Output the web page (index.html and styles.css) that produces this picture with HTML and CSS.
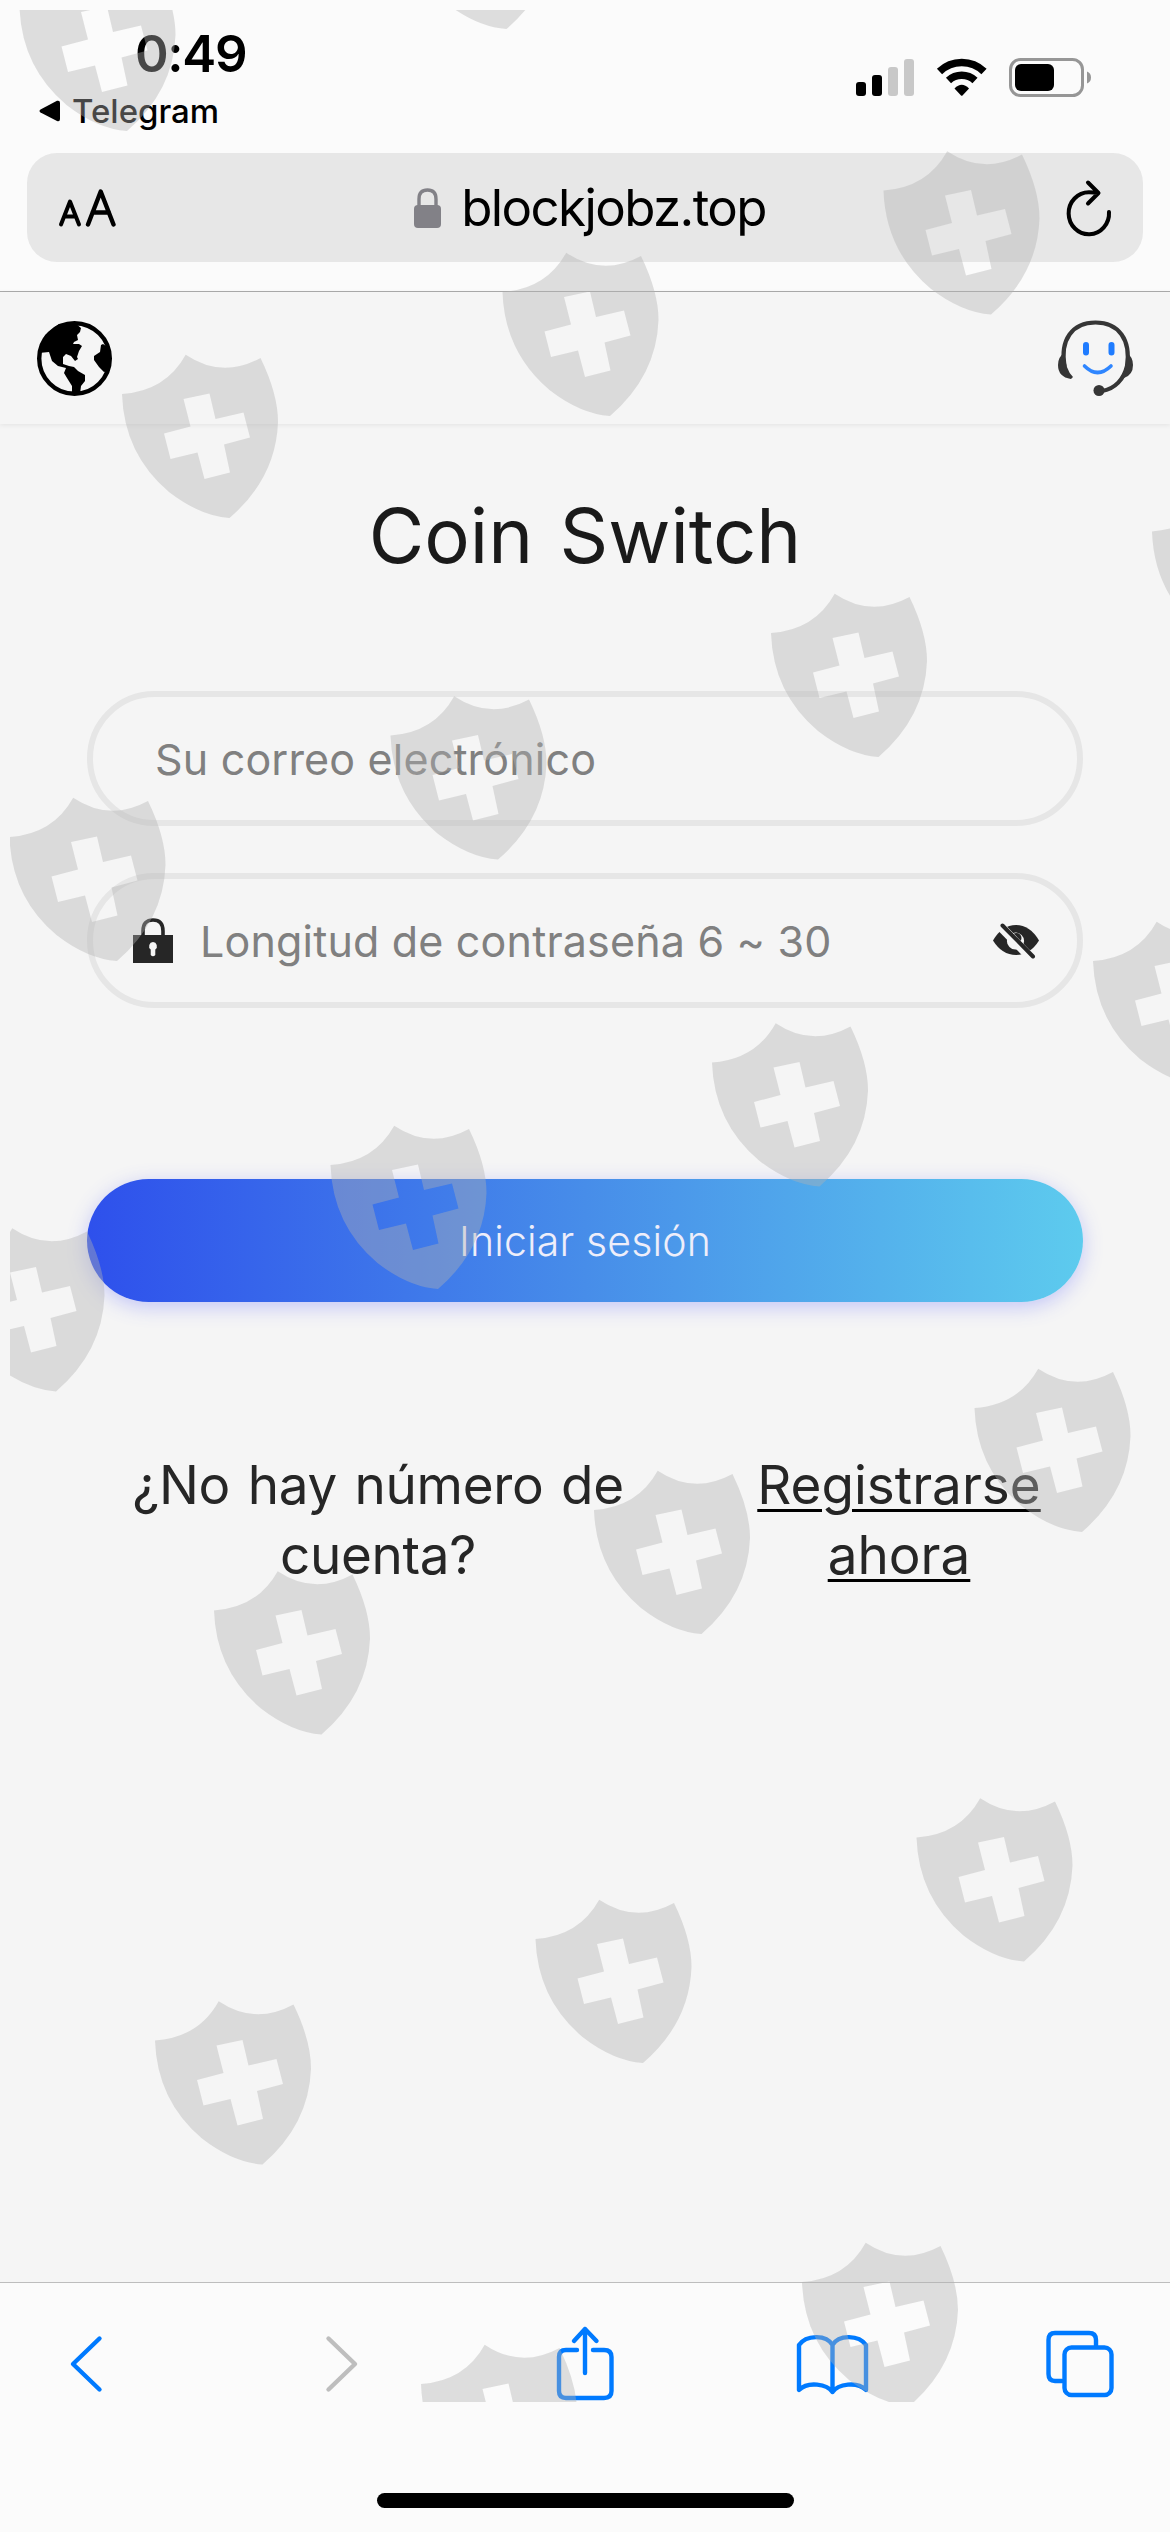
FILE: index.html
```html
<!DOCTYPE html>
<html lang="es">
<head>
<meta charset="utf-8">
<title>Coin Switch</title>
<link rel="stylesheet" href="styles.css">
</head>
<body>
<div class="phone">
  <header class="browser-top">
    <div class="status">
      <div class="status-left">
        <div class="time">0:49</div>
        <div class="back-app">
          <svg width="22" height="22" viewBox="0 0 22 22"><path d="M1.500 9.500 L18 .8 Q21 0 21 3 V19 Q21 22 18 21 L1.500 12.500 Q-.5 11 1.500 9.500Z"/></svg>
          <span>Telegram</span>
        </div>
      </div>
      <svg class="status-icons" width="240" height="42" viewBox="854 57 240 42">
        <rect x="856" y="82" width="10" height="14" rx="3"/>
        <rect x="872" y="75" width="10" height="21" rx="3"/>
        <rect x="888" y="67" width="10" height="29" rx="3" fill="#c8c8c8"/>
        <rect x="904" y="59" width="10" height="37" rx="3" fill="#c8c8c8"/>
        <g fill="none" stroke="#000" stroke-width="7.500">
          <path d="M939.500 71.500 A32 32 0 0 1 984 71.500"/>
          <path d="M948.500 80.500 A19.500 19.500 0 0 1 975 80.500"/>
        </g>
        <path d="M954.500 88.500 Q961.800 81 969 88.500 L962.500 95.500 Q961.800 96 961 95.500Z"/>
        <rect x="1010.500" y="59.500" width="72" height="36" rx="10" fill="none" stroke="#969696" stroke-width="3"/>
        <rect x="1015" y="64" width="39" height="27" rx="6"/>
        <path d="M1087 71.500 Q1091 73 1091 77.500 T1087 83.500Z" fill="#969696"/>
      </svg>
    </div>
    <div class="url-bar">
      <svg class="aa" width="60" height="42" viewBox="56 187 60 42" fill="none" stroke="#000" stroke-width="4" stroke-linecap="round" stroke-linejoin="round">
        <path d="M61 224.500 L70 201.500 L79 224.500 M64.500 216.500 H75.500"/>
        <path d="M88 224.500 L100.700 191.500 L113.500 224.500 M92.500 212.500 H109" stroke-width="4.400"/>
      </svg>
      <div class="address">
        <svg width="27" height="40" viewBox="0 0 27 40"><rect y="17" width="27" height="23" rx="4" fill="#828187"/><path d="M5 18 V11 Q5 2 13.500 2 T22 11 V18" fill="none" stroke="#828187" stroke-width="3.400"/></svg>
        <span>blockjobz.top</span>
      </div>
      <svg class="reload" width="50" height="60" viewBox="1064 176 50 60" fill="none" stroke="#000" stroke-width="4" stroke-linecap="round" stroke-linejoin="round">
        <path d="M1109 210 A20.200 21 0 1 1 1089 190.300 L1098 190.800 M1088 180.500 L1098.500 191 L1088 201.500"/>
      </svg>
    </div>
  </header>

  <main class="page">
    <nav class="page-bar">
      <svg width="75" height="75" viewBox="0 0 75 75">
        <circle cx="37.500" cy="37.500" r="35.300" fill="none" stroke="#000" stroke-width="4.400"/>
        <path d="M38 2 L44 7 L43 11 L40 14 L41 19 L37 21 L36 23 L42 23 L45 25 L42 30 L40 36 L41 38 L38 40 L34 35 L29 33 L26 36 L26 43 L32 45 L37 46 L41 50 L48 54 L48 60 L44 65 L43 73 L35 73 V65 L30 57 L27 52 L29 47 L21 45 L15 40 L12 31 L2 32 L8 14 L22 3Z"/>
        <path d="M66 23 L72 27 L74 38 L71 50 L67 51 L62 46 L57 39 L57 35 L63 31 L64 24Z"/>
      </svg>
      <svg width="76" height="76" viewBox="0 0 76 76" fill="none" stroke="#363636" stroke-linecap="round">
        <path d="M6.500 46 C2 20 14 2.500 37.500 2.500 S73 20 69 46 C66 59 57 69 44 71" stroke-width="4.200"/>
        <path d="M6 33 Q0 37 0 45 Q0 57 13 59 L15 57 Q7 49 7 34Z M69 33 Q75 37 75 45 Q75 55 66 58 L63 57 Q69 47 69 34Z" fill="#363636" stroke="none"/>
        <circle cx="41" cy="70.500" r="5.500" fill="#363636" stroke="none"/>
        <path d="M28 25 V32.500 M53.500 25 V32.500" stroke="#1f7cff" stroke-width="6"/>
        <path d="M26.500 46 Q39.500 59 53 46" stroke="#2f86ff" stroke-width="3.600"/>
      </svg>
    </nav>
    <section class="login">
      <h1 class="title">Coin Switch</h1>
      <div class="field field-email"><span class="hint-email">Su correo electrónico</span></div>
      <div class="field field-pass">
        <svg width="40" height="45" viewBox="0 0 40 45"><path fill="#262626" fill-rule="evenodd" d="M0 17 H40 V45 H0Z M20 24 a4.200 4.200 0 0 0 -2.300 7.500 V37 q2.300 2.500 4.600 0 V31.500 A4.200 4.200 0 0 0 20 24Z"/><path d="M10 18 V13 Q10 2 20 2 T30 13 V18" fill="none" stroke="#262626" stroke-width="3.600"/></svg>
        <span class="hint-pass">Longitud de contraseña 6 ~ 30</span>
        <svg class="eye" width="48" height="36" viewBox="0 0 48 36">
          <path fill="#262626" d="M1 17.500 Q10 2 24 2 T47 17.500 Q38 32 24 32 T1 17.500Z"/>
          <circle cx="23.500" cy="18" r="8.600" fill="#f5f5f5"/>
          <circle cx="24.500" cy="15" r="5" fill="#262626"/>
          <path d="M9 4 L40 36" stroke="#f5f5f5" stroke-width="9"/>
          <path d="M10.500 2.500 L41 33.500" stroke="#262626" stroke-width="4" stroke-linecap="round"/>
        </svg>
      </div>
      <button class="submit" type="button">Iniciar sesión</button>
      <div class="note">
        <p class="question">¿No hay número de<br>cuenta?</p>
        <p class="register">Registrarse<br>ahora</p>
      </div>
    </section>
  </main>

  <footer class="toolbar">
    <div class="tools">
      <svg width="36" height="60" viewBox="68 2334 36 60"><path d="M99.500 2338.500 L73 2364 L99.500 2389.500"/></svg>
      <svg class="off" width="36" height="60" viewBox="324 2334 36 60"><path d="M328.500 2338.500 L355 2364 L328.500 2389.500"/></svg>
      <svg width="62" height="78" viewBox="554 2323 62 78"><path d="M577 2348 H566 Q559 2348 559 2355 V2389 Q559 2396 566 2396 H604 Q611.500 2396 611.500 2389 V2355 Q611.500 2348 604 2348 H593 M585 2371 V2327 M574 2339 L585 2327 L596.500 2339"/></svg>
      <svg width="76" height="64" viewBox="794 2331 76 64"><path d="M832.500 2391 C827 2383 808 2380 799 2389 V2344 C806 2334 826 2333 832.500 2344 C839 2333 859 2334 866 2344 V2389 C857 2380 838 2383 832.500 2391Z M832.500 2344 V2391"/></svg>
      <svg width="72" height="70" viewBox="1044 2329 72 70"><path d="M1062 2381 H1055 Q1048.500 2381 1048.500 2374 V2340 Q1048.500 2333 1055 2333 H1089 Q1096 2333 1096 2340 V2346"/><rect x="1064.500" y="2347.500" width="47" height="47.500" rx="7"/></svg>
    </div>
    <div class="home-bar"></div>
  </footer>

  <svg class="watermark" width="1160" height="2392" viewBox="10 10 1160 2392" aria-hidden="true">
    <defs>
      <path id="shield" fill-rule="evenodd" d="M0 0 Q43.700 -3 63.700 -39.300 Q100 -15 138.500 -36 Q156 0 156 28 Q154 84 107.500 124 Q78 122 47 98 Q2 60 0 0Z M61.500 5 L87.500 -.5 L93.500 25 L121.500 18.500 L128 43.500 L102 50.500 L108 78.500 L82.500 85 L75.500 58.500 L48.500 65 L42 39.500 L68.500 32.500Z"/>
    </defs>
    <g fill="#b2b2b2" fill-opacity=".4">
      <use href="#shield" x="19.500" y="7"/>
      <use href="#shield" x="399" y="-95"/>
      <use href="#shield" x="122" y="394"/>
      <use href="#shield" x="502.500" y="292"/>
      <use href="#shield" x="883.500" y="190.500"/>
      <use href="#shield" x="1152" y="531.500"/>
      <use href="#shield" x="771" y="633"/>
      <use href="#shield" x="390.500" y="735.500"/>
      <use href="#shield" x="9.500" y="837"/>
      <use href="#shield" x="1093" y="961"/>
      <use href="#shield" x="712" y="1062.500"/>
      <use href="#shield" x="330.500" y="1165"/>
      <use href="#shield" x="-51.500" y="1267.500"/>
      <use href="#shield" x="974.500" y="1408"/>
      <use href="#shield" x="594" y="1510"/>
      <use href="#shield" x="214" y="1610.500"/>
      <use href="#shield" x="916.500" y="1837.500"/>
      <use href="#shield" x="535.500" y="1939"/>
      <use href="#shield" x="155" y="2040.500"/>
      <use href="#shield" x="802" y="2282"/>
      <use href="#shield" x="421" y="2384"/>
    </g>
  </svg>
</div>
</body>
</html>
```
FILE: styles.css
```css
* { box-sizing: border-box; }

body {
  margin: 0;
  background: #f5f5f5;
  font-family: Inter, "Liberation Sans", sans-serif;
}

svg { display: block; flex: none; }

.phone {
  position: relative;
  width: 1170px;
  height: 2532px;
  overflow: hidden;
  display: flex;
  flex-direction: column;
}

.browser-top {
  height: 292px;
  background: #fbfbfb;
  border-bottom: 1px solid #acacac;
}

.status {
  height: 153px;
  display: flex;
  justify-content: space-between;
  padding: 29px 76px 0 39px;
}

.time {
  margin-left: 96px;
  font-size: 51px;
  font-weight: 600;
  line-height: 50px;
  letter-spacing: -1.3px;
  white-space: nowrap;
}

.back-app {
  display: flex;
  align-items: center;
  gap: 11px;
  height: 40px;
  margin-top: 12px;
  font-size: 33px;
  font-weight: 500;
}

.status-icons { margin-top: 28px; }

.url-bar {
  height: 109px;
  margin: 0 27px;
  padding: 0 29px;
  border-radius: 30px;
  background: #e7e7e7;
  display: flex;
  align-items: center;
  justify-content: space-between;
}

.address {
  display: flex;
  align-items: center;
  gap: 20px;
  font-size: 51px;
  letter-spacing: -1.6px;
}

.page { height: 1990px; background: #f5f5f5; }

.page-bar {
  height: 132px;
  padding: 0 36px 0 37px;
  display: flex;
  align-items: center;
  justify-content: space-between;
  box-shadow: 0 1px 5px rgba(0, 0, 0, .08);
}

.login { padding: 61px 87px 0; }

.title {
  margin: 0 0 106px;
  font-size: 76px;
  font-weight: 400;
  line-height: 100px;
  word-spacing: 5px;
  text-align: center;
  color: #1a1a1a;
}

.field {
  height: 135px;
  border: 6px solid #e6e6e6;
  border-radius: 68px;
  display: flex;
  align-items: center;
  color: #808080;
  font-size: 43px;
  letter-spacing: .18px;
  white-space: nowrap;
}

.field-email { padding-left: 62px; }
.field-pass { margin-top: 47px; padding: 0 37px 0 40px; }
.hint-pass { margin-left: 27px; }
.eye { margin-left: auto; }

.submit {
  display: block;
  width: 100%;
  height: 123px;
  margin-top: 171px;
  border: 0;
  border-radius: 62px;
  background: linear-gradient(90deg, #2e50ec, #478de9 50%, #5dcbee);
  box-shadow: 0 5px 20px rgba(80, 90, 255, .3);
  color: #eeeefa;
  font: 300 41px/123px Inter, "Liberation Sans", sans-serif;
  letter-spacing: .15px;
}

.note {
  display: grid;
  grid-template-columns: 582px 368px;
  gap: 46px;
  margin-top: 149px;
  color: #262626;
  font-size: 53px;
  line-height: 69.500px;
  text-align: center;
  white-space: nowrap;
}

.note p { margin: 0; }

.question {
  letter-spacing: -.3px;
  word-spacing: 3px;
}

.register {
  text-decoration: underline #000 3px;
  text-underline-offset: 5px;
}

.toolbar {
  height: 250px;
  background: #fbfbfb;
  border-top: 1px solid #bdbdbd;
}

.tools {
  height: 210px;
  padding: 0 54px 48px 68px;
  display: grid;
  grid-template-columns: 256px 230px 240px 250px 72px;
  align-items: center;
  fill: none;
  stroke: #007aff;
  stroke-width: 4.400;
  stroke-linecap: round;
  stroke-linejoin: round;
}

.off { stroke: #bebebe; }

.home-bar {
  width: 417px;
  height: 15px;
  margin: 0 auto;
  border-radius: 8px;
  background: #000;
}

.watermark { position: absolute; left: 10px; top: 10px; }
```
